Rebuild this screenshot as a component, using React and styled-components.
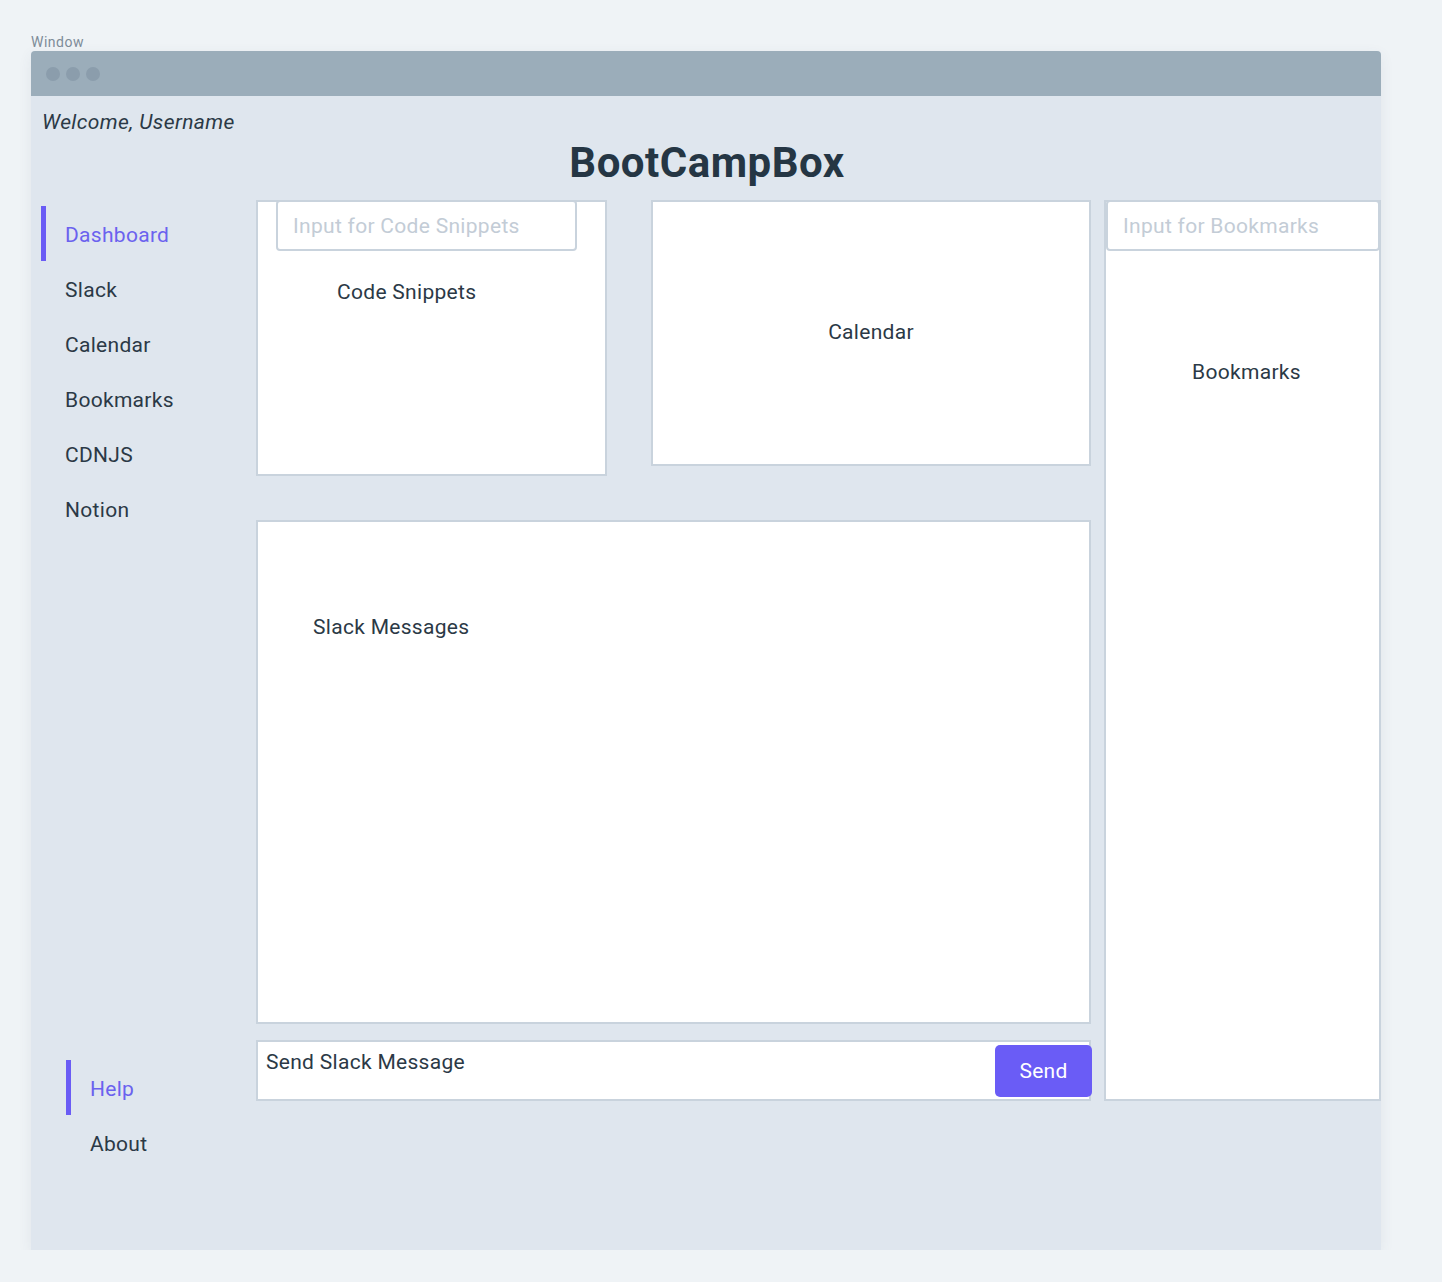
import React from "react";
import styled, { createGlobalStyle } from "styled-components";

const GlobalStyle = createGlobalStyle`
    body {
        margin: 0;
        background: #eff3f6;
        font-family: Roboto, "Noto Sans", sans-serif;
        color: #2b3946;
    }
`;

const Page = styled.div`
    padding: 33px 0 0 31px;
    width: 1350px;
`;

const WindowLabel = styled.div`
    font-size: 14px;
    line-height: 18px;
    letter-spacing: 0.5px;
    color: #7d8b98;
`;

const Window = styled.div`
    display: flex;
    flex-direction: column;
    height: 1199px;
    background: #dfe6ee;
    border-radius: 4px 4px 0 0;
    box-shadow: 0 4px 14px rgba(60, 80, 100, 0.08);
`;

const TitleBar = styled.div`
    display: flex;
    align-items: center;
    gap: 6px;
    height: 45px;
    padding-left: 15px;
    background: #9badba;
    border-radius: 4px 4px 0 0;
`;

const Dot = styled.span`
    width: 14px;
    height: 14px;
    border-radius: 50%;
    background: #8b9dac;
`;

const Body = styled.div`
    flex: 1;
    display: flex;
    flex-direction: column;
`;

const Welcome = styled.div`
    margin: 13px 0 0 11px;
    font-size: 21px;
    line-height: 26px;
    letter-spacing: 0.4px;
    font-style: italic;
`;

const Title = styled.h1`
    margin: 4px 0 13px;
    text-align: center;
    font-size: 42px;
    line-height: 48px;
    letter-spacing: 0.5px;
    font-weight: 700;
    color: #253644;
    padding-left: 2px;
`;

const Main = styled.div`
    flex: 1;
    display: flex;
`;

const Sidebar = styled.nav`
    width: 226px;
    display: flex;
    flex-direction: column;
    justify-content: space-between;
    padding: 6px 0 80px 10px;
    box-sizing: border-box;
`;

const NavGroup = styled.div`
    display: flex;
    flex-direction: column;
    margin-left: ${({ $indent }) => $indent || 0}px;
`;

const NavItem = styled.div`
    display: flex;
    align-items: center;
    height: 55px;
    padding: 2px 0 0 19px;
    box-sizing: border-box;
    border-left: 5px solid ${({ $active }) => ($active ? "#6a5cf5" : "transparent")};
    font-size: 21px;
    letter-spacing: 0.3px;
    color: ${({ $active }) => ($active ? "#6b62ee" : "#2b3946")};
`;

const Content = styled.div`
    display: flex;
    gap: 13px;
    height: 901px;
`;

const LeftCol = styled.div`
    width: 835px;
    display: flex;
    flex-direction: column;
`;

const TopRow = styled.div`
    display: flex;
    justify-content: space-between;
    align-items: flex-start;
    margin-bottom: 44px;
`;

const Panel = styled.div`
    box-sizing: border-box;
    background: #fff;
    border: 2px solid #c9d3dd;
    width: ${({ $w }) => $w}px;
    height: ${({ $h }) => $h}px;
    display: flex;
    flex-direction: column;
`;

const PanelInput = styled.input`
    box-sizing: border-box;
    margin: -2px ${({ $mr }) => $mr}px 0 ${({ $ml }) => $ml}px;
    height: 51px;
    border: 2px solid #c9d3dd;
    border-radius: 4px;
    padding: 0 15px;
    font-family: inherit;
    font-size: 21px;
    letter-spacing: 0.3px;
    color: #2b3946;
    background: #fff;
    outline: none;
    &::placeholder {
        color: #c3ccd6;
    }
`;

const PanelLabel = styled.div`
    font-size: 21px;
    letter-spacing: 0.3px;
    line-height: 26px;
    margin: ${({ $m }) => $m};
    text-align: ${({ $center }) => ($center ? "center" : "left")};
`;

const CenterLabel = styled(PanelLabel)`
    margin: auto;
    padding-bottom: 2px;
`;

const SendRow = styled.div`
    box-sizing: border-box;
    margin-top: 16px;
    height: 61px;
    border: 2px solid #c9d3dd;
    background: #fff;
    display: flex;
    justify-content: space-between;
    align-items: flex-start;
`;

const SendText = styled.div`
    padding: 7px 0 0 8px;
    font-size: 21px;
    letter-spacing: 0.3px;
    line-height: 26px;
`;

const SendButton = styled.button`
    margin: 3px -3px 0 0;
    width: 97px;
    height: 52px;
    border: none;
    border-radius: 5px;
    background: #6a5cf6;
    color: #fff;
    font-family: inherit;
    font-size: 21px;
    letter-spacing: 0.3px;
`;

const App = () => {
    const nav = ["Dashboard", "Slack", "Calendar", "Bookmarks", "CDNJS", "Notion"];
    return (
        <>
            <GlobalStyle />
            <Page>
                <WindowLabel>Window</WindowLabel>
                <Window>
                    <TitleBar>
                        <Dot />
                        <Dot />
                        <Dot />
                    </TitleBar>
                    <Body>
                        <Welcome>Welcome, Username</Welcome>
                        <Title>BootCampBox</Title>
                        <Main>
                            <Sidebar>
                                <NavGroup>
                                    {nav.map((item, i) => (
                                        <NavItem key={item} $active={i === 0}>
                                            {item}
                                        </NavItem>
                                    ))}
                                </NavGroup>
                                <NavGroup $indent={25}>
                                    <NavItem $active>Help</NavItem>
                                    <NavItem>About</NavItem>
                                </NavGroup>
                            </Sidebar>
                            <Content>
                                <LeftCol>
                                    <TopRow>
                                        <Panel $w={351} $h={276}>
                                            <PanelInput
                                                $ml={18}
                                                $mr={28}
                                                placeholder="Input for Code Snippets"
                                            />
                                            <PanelLabel $m="28px 0 0 79px">Code Snippets</PanelLabel>
                                        </Panel>
                                        <Panel $w={440} $h={266}>
                                            <CenterLabel>Calendar</CenterLabel>
                                        </Panel>
                                    </TopRow>
                                    <Panel $w={835} $h={505}>
                                        <PanelLabel $m="92px 0 0 55px">Slack Messages</PanelLabel>
                                    </Panel>
                                    <SendRow>
                                        <SendText>Send Slack Message</SendText>
                                        <SendButton>Send</SendButton>
                                    </SendRow>
                                </LeftCol>
                                <Panel $w={277} $h={901}>
                                    <PanelInput
                                        $ml={0}
                                        $mr={-1}
                                        placeholder="Input for Bookmarks"
                                    />
                                    <PanelLabel $center $m="108px 0 0 8px">
                                        Bookmarks
                                    </PanelLabel>
                                </Panel>
                            </Content>
                        </Main>
                    </Body>
                </Window>
            </Page>
        </>
    );
};

export default App;
